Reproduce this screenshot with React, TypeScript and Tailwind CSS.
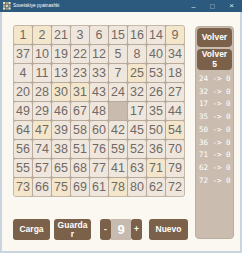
import React from 'react';

const BOARD: (number | null)[] = [
  1, 2, 21, 3, 6, 15, 16, 14, 9,
  37, 10, 19, 22, 12, 5, 8, 40, 34,
  4, 11, 13, 23, 33, 7, 25, 53, 18,
  20, 28, 30, 31, 43, 24, 32, 26, 27,
  49, 29, 46, 67, 48, null, 17, 35, 44,
  64, 47, 39, 58, 60, 42, 45, 50, 54,
  56, 74, 38, 51, 76, 59, 52, 36, 70,
  55, 57, 65, 68, 77, 41, 63, 71, 79,
  73, 66, 75, 69, 61, 78, 80, 62, 72,
];

const HISTORY = [24, 32, 17, 35, 50, 36, 71, 62, 72];

// tiny app icon in the title bar
const AppIcon = () => (
  <svg width="8" height="8" viewBox="0 0 8 8">
    {[0, 1, 2].map((r) =>
      [0, 1, 2].map((c) => (
        <rect
          key={`${r}-${c}`}
          x={c * 2.7}
          y={r * 2.7}
          width="2.2"
          height="2.2"
          fill={(r + c) % 2 === 0 ? '#e9dcc4' : '#b99a6f'}
        />
      ))
    )}
  </svg>
);

const Cell = ({ value, index }: { value: number | null; index: number }) => {
  if (value === null) {
    return <div className="h-[18px] rounded-[1.5px] bg-[#c9bcaf]" />;
  }
  const inPlace = value === index + 1;
  return (
    <div
      className={`h-[18px] rounded-[1.5px] flex items-center justify-center text-[12.5px] leading-none text-[#6f6a65] ${
        inPlace ? 'bg-[#f3e6cb]' : 'bg-[#efe6dd]'
      }`}
    >
      {value}
    </div>
  );
};

export default function App() {
  return (
    <div
      className="w-[242px] h-[253px] flex flex-col overflow-hidden"
      style={{ fontFamily: '"Liberation Sans", Arial, sans-serif' }}
    >
      {/* Title bar */}
      <div className="h-[12px] bg-[#2c5a7f] flex items-center pl-[3px]">
        <AppIcon />
        <span className="ml-[2px] text-[4.7px] text-white leading-none">Sovetskiye pyatnashki</span>
        <div className="ml-auto flex items-center pr-[1px] text-[#dfe7ee]">
          <span className="w-[19px] text-center text-[7px] leading-none">–</span>
          <span className="w-[19px] flex justify-center">
            <span className="w-[5px] h-[5px] border border-[#5d7f9c]" />
          </span>
          <span className="w-[19px] text-center text-[8px] leading-none">×</span>
        </div>
      </div>

      {/* Body */}
      <div className="flex-1 bg-[#fbf8f1] border-x-2 border-b-2 border-[#c8d5df] flex gap-[7px] pl-[11px] pt-[13px]">
        <div className="flex flex-col items-start">
          <div className="w-[172px] grid grid-cols-9 gap-px bg-[#b9ab9c] border border-[#c6b8a9] rounded-[3px]">
            {BOARD.map((v, i) => (
              <Cell key={i} value={v} index={i} />
            ))}
          </div>

          <div className="mt-[22px] flex items-center text-white font-bold text-[8.5px]">
            <button className="w-[37px] h-[21px] rounded-[3px] bg-[#7b6149]">Carga</button>
            <button className="ml-[4px] w-[37px] h-[21px] rounded-[3px] bg-[#7b6149] px-[3px] leading-[9px] break-all">
              Guardar
            </button>
            <div className="ml-[9px] flex items-center">
              <button className="w-[11px] h-[21px] rounded-[3px] bg-[#7b6149]">-</button>
              <div className="w-[20px] h-[21px] bg-[#c7baae] flex items-center justify-center text-[13px]">9</div>
              <button className="w-[11px] h-[21px] rounded-[3px] bg-[#7b6149]">+</button>
            </div>
            <button className="ml-[7px] w-[39px] h-[21px] rounded-[3px] bg-[#7b6149]">Nuevo</button>
          </div>
        </div>

        {/* History panel */}
        <div className="mt-[1px] w-[39px] h-[213px] rounded-[4px] border border-[#bcae9f] bg-[#cabdb0] p-px flex flex-col gap-[2px]">
          <button className="h-[19px] rounded-[4px] bg-[#7b6149] text-white font-bold text-[8.5px]">Volver</button>
          <button className="h-[21px] rounded-[4px] bg-[#7b6149] text-white font-bold text-[8.5px] leading-[9.5px]">
            Volver
            <br />5
          </button>
          <div
            className="mt-[1px] pl-[2px] text-[7.5px] leading-[12.7px] text-white whitespace-pre"
            style={{ fontFamily: '"DejaVu Sans Mono", monospace' }}
          >
            {HISTORY.map((n) => (
              <div key={n}>{`${n} -> 0`}</div>
            ))}
          </div>
        </div>
      </div>
    </div>
  );
}
